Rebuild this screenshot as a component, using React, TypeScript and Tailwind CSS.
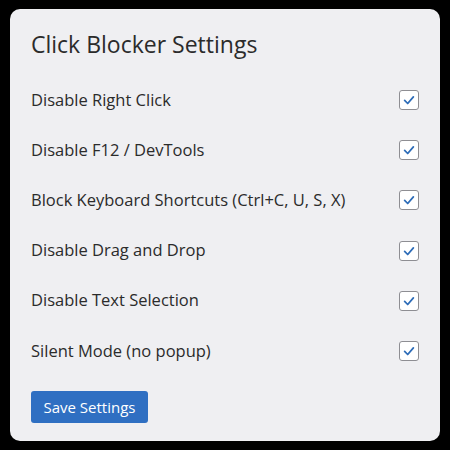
const options = [
  'Disable Right Click',
  'Disable F12 / DevTools',
  'Block Keyboard Shortcuts (Ctrl+C, U, S, X)',
  'Disable Drag and Drop',
  'Disable Text Selection',
  'Silent Mode (no popup)',
];

function CheckBox() {
  return (
    <span className="flex h-5 w-5 items-center justify-center rounded-[3px] border-[1.5px] border-[#8e8e93] bg-white">
      <svg viewBox="0 0 16 16" className="h-[14px] w-[14px]" fill="none">
        <path
          d="M3 8.5 L6.5 12 L13 4.5"
          stroke="#2d6cb8"
          strokeWidth="2"
          strokeLinecap="round"
          strokeLinejoin="round"
        />
      </svg>
    </span>
  );
}

export default function App() {
  return (
    <div className="h-[450px] w-[450px] bg-black pt-[9px] pl-[10px] font-['Open_Sans','Noto_Sans',sans-serif]">
      <div className="flex h-[432px] w-[430px] flex-col rounded-[10px] bg-[#efeff2] pl-[21px] pr-[21px] pt-[19px]">
        {/* Title */}
        <h1 className="h-[32px] text-[23px] leading-[32px] text-[#2b2b2b]">
          Click Blocker Settings
        </h1>

        {/* Options */}
        <div className="mt-[15px] flex flex-col">
          {options.map((label) => (
            <label key={label} className="flex h-[50.2px] items-center justify-between">
              <span className="text-[16.5px] text-[#2b2b2b]">{label}</span>
              <CheckBox />
            </label>
          ))}
        </div>

        <button className="mt-[15px] h-[32px] w-[117px] rounded-[3px] bg-[#2f6fc2] text-[15px] text-white">
          Save Settings
        </button>
      </div>
    </div>
  );
}
